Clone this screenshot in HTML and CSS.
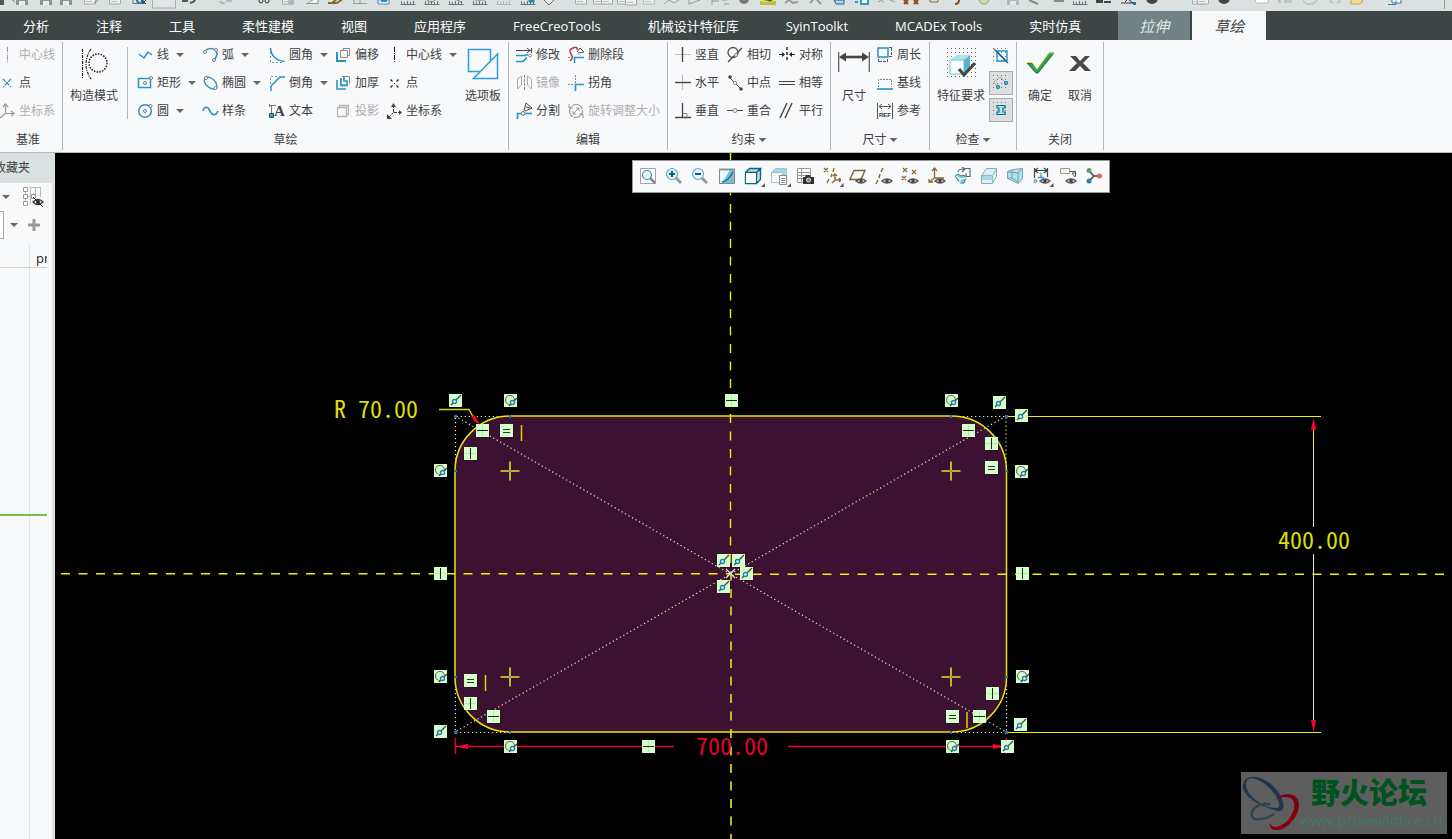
FILE: index.html
```html
<!DOCTYPE html>
<html lang="zh-CN">
<head>
    <meta charset="UTF-8">
    <meta name="viewport" content="width=device-width, initial-scale=1.0">
    <title>草绘</title>
    <link rel="stylesheet" href="styles.css">
</head>
<body>
    <div class="quickbar">
        <svg width="1452" height="11" viewBox="0 0 1452 11" aria-hidden="true">
            <defs>
                <g id="q-ruler"><path d="M0 1h16" stroke="#9a9a9a"/><path d="M.5 9.500h15M1.500 6v3M4.500 7v2M7.500 6v3M10.500 7v2M13.500 6v3" stroke="#6d7272" fill="none"/></g>
                <g id="q-save"><path d="M0 0h12v5H0z" fill="#8d9393"/><path d="M3 1h6v4H3z" fill="#eceeee"/></g>
                <g id="q-page"><path d="M1.500-2h11v6h-11z" fill="#eef0f0" stroke="#a4a9a9"/><path d="M3 1.500h6" stroke="#bbb"/></g>
            </defs>
            <path d="M0 0h4v5H0z" fill="#555"/>
            <use href="#q-save" x="16"/><use href="#q-save" x="40"/><use href="#q-save" x="60"/>
            <path d="M12 0l3 2" stroke="#888"/>
            <use href="#q-page" x="83"/><path d="M94 3l4-3" stroke="#888"/><use href="#q-page" x="108"/>
            <path d="M133 0v3.500h12" stroke="#777" fill="none"/><circle cx="140" cy="0" r="3" fill="none" stroke="#247fa8" stroke-width="2"/><path d="M141 0l5 4M146 0l-4 4" stroke="#333"/>
            <path d="M152.500-1v9h23v-9" fill="#e2e5e5" stroke="#a9aeae"/>
            <path d="M182 1h6M190 3q5-1 5-4" stroke="#555" fill="none" stroke-width="2"/>
            <path d="M220 1q1 3 5 2M226 1h6" stroke="#b5baba" fill="none" stroke-width="2"/>
            <circle cx="261" cy="1" r="2" fill="none" stroke="#333"/><circle cx="267" cy="1" r="2" fill="none" stroke="#333"/>
            <use href="#q-page" x="281"/><circle cx="291" cy="2" r="3" fill="#b4b9b9"/>
            <path d="M306 3.500h12v-5M308 3l6-4" stroke="#8f9595" fill="#f4f6f6"/>
            <path d="M328 3h9l7-5M332 3l6-5" stroke="#8b6b2e" fill="none" stroke-width="2"/>
            <path d="M353 3.500h14M354 0v3M360 0v3" stroke="#999"/>
            <path d="M378 0h11v4h-11z" fill="#e5f4fa" stroke="#5e8ea6"/><path d="M381 0h6v2h-6z" fill="#2b94c5"/>
            <g transform="translate(0 -5)">
                <use href="#q-ruler" x="400"/><use href="#q-ruler" x="424"/><use href="#q-ruler" x="448"/><use href="#q-ruler" x="472"/>
                <use href="#q-ruler" x="496" opacity=".4"/><use href="#q-ruler" x="520"/><use href="#q-ruler" x="1072"/>
            </g>
            <path d="M427 0q5 4 8 0M475 0h10" stroke="#777" fill="none"/><path d="M457 0l4 2M529 0h5v2h-5z" stroke="#2588ad" fill="#2588ad"/>
            <path d="M544 0l5 5 5-5" fill="#eee" stroke="#666"/>
            <use href="#q-page" x="574"/><use href="#q-page" x="592"/><use href="#q-page" x="600"/><use href="#q-page" x="616"/><use href="#q-page" x="624" y="1"/>
            <use href="#q-page" x="642" opacity=".6"/>
            <path d="M664 4l5-4 5 3 5-3M689-1v5l11-4M712 0v5M712 1h7M722 0h5M724 4h5" stroke="#999" fill="none"/>
            <circle cx="744" cy="-1" r="5" fill="#777"/>
            <path d="M760 1h16v4h-16z" fill="#b9c52b"/><path d="M762 1l8 1 4-2" stroke="#f0ee65"/>
            <path d="M785 3l4-3 4 3 5-1M810 3l3-3M817 0l4 4" stroke="#999" fill="none" stroke-width="2"/>
            <path d="M834 0h10v4h-8z" fill="#a6dcf1" stroke="#345a6b"/>
            <path d="M855 2h3M861-1h7v5h-7z" stroke="#2a98cc" fill="#fff" stroke-width="2"/>
            <path d="M878 2q4-3 6 0M888-1l7 3" stroke="#999" fill="none"/>
            <path d="M904 0l4 4M908 0l-4 4M914 0l4 4M918 0l-4 4M959 0q0 4-4 4" stroke="#8a4a1a" fill="none" stroke-width="2"/>
            <path d="M930-2v4h8v-4" stroke="#8b6b2e" fill="none"/>
            <circle cx="984" cy="-1" r="5" fill="#bde59b" stroke="#999"/>
            <use href="#q-save" x="1007" opacity=".5"/><path d="M1029 0l9 4M1054 1h10" stroke="#888" stroke-width="2"/>
            <path d="M1097 0h5v2h-5zM1104 2h7" stroke="#444" stroke-width="2"/>
            <path d="M1121 3h14M1125 2l3-3M1129 0l4 3" stroke="#333"/><path d="M1133 2h3v3h-3z" fill="#1a7ba3"/>
            <circle cx="1152" cy="-2" r="6" fill="#444"/><circle cx="1224" cy="-2" r="6" fill="#444"/>
            <use href="#q-page" x="1191"/><use href="#q-page" x="1196"/>
            <rect x="1255.500" y="-4" width="13" height="7" rx="2" fill="#fff" stroke="#bbb"/>
            <path d="M1278 2h3M1284 2h8M1278 0h3M1284 0h8M1303 1l4 3h6l4-4M1330-1q0 4 3 4M1340-1q0 4-3 4" stroke="#aaa" fill="none"/>
            <path d="M1351-1h9l3 2-3 3h-9z" fill="#f2d9a0" stroke="#c6a25a"/>
            <path d="M1388 4.500h8v-4M1392-2h9v5h-9z" fill="#fff" stroke="#277da0"/>
            <path d="M1444.500 0v9" stroke="#999"/>
        </svg>
    </div>

    <nav class="tabs">
        <button>分析</button>
        <button>注释</button>
        <button>工具</button>
        <button>柔性建模</button>
        <button>视图</button>
        <button>应用程序</button>
        <button>FreeCreoTools</button>
        <button>机械设计特征库</button>
        <button>SyinToolkt</button>
        <button>MCADEx Tools</button>
        <button>实时仿真</button>
        <button class="context">拉伸</button>
        <button class="context active">草绘</button>
    </nav>

    <div class="ribbon">
        <section class="group datum">
            <div class="tools">
                <div class="col">
                    <button class="tool" disabled><svg class="icon" viewBox="0 0 16 16"><path d="M8.500 0v16" stroke="#999" stroke-dasharray="5 1 1 1"/></svg>中心线</button>
                    <button class="tool"><svg class="icon" viewBox="0 0 16 16"><path d="M4 4l8 8M12 4l-8 8" stroke="#3b8fb3" stroke-width="1.200" stroke-dasharray="4 1"/><path d="M7 7h2v2H7z" fill="#3b8fb3"/></svg>点</button>
                    <button class="tool" disabled><svg class="icon" viewBox="0 0 16 16"><path d="M6.500 1v9.500H15M6.500 10.500L1 15M4 4l2.500-3L9 4M12 8l3 2.500-3 2.500" fill="none" stroke="#999" stroke-width="1.200"/></svg>坐标系</button>
                </div>
            </div>
            <div class="title">基准</div>
        </section>

        <section class="group sketch">
            <div class="tools">
                <button class="big construct"><svg viewBox="0 0 32 32"><path d="M4.500 1v30M13 1q-10 15 0 30" fill="none" stroke="#222" stroke-width="1.200" stroke-dasharray="3 1 1 1"/><circle cx="20" cy="15" r="9" fill="none" stroke="#222" stroke-width="1.500" stroke-dasharray="1.500 1.300"/></svg>构造模式</button>
                <div class="col a">
                    <button class="tool"><svg class="icon" viewBox="0 0 16 16"><path d="M2 7l5 4 4-6 4 3" fill="none" stroke="#2494c8" stroke-width="1.500"/></svg>线<i class="caret"></i></button>
                    <button class="tool"><svg class="icon" viewBox="0 0 16 16"><path d="M1.500 3.500h12v9h-12z" fill="none" stroke="#2494c8" stroke-width="1.500"/><circle cx="8" cy="8" r="1.500" fill="none" stroke="#777"/><circle cx="14" cy="3" r="1.500" fill="#fff" stroke="#777"/></svg>矩形<i class="caret"></i></button>
                    <button class="tool"><svg class="icon" viewBox="0 0 16 16"><circle cx="8" cy="8" r="6.300" fill="none" stroke="#2494c8" stroke-width="1.500"/><circle cx="8" cy="8" r="1.500" fill="none" stroke="#777"/><circle cx="13.500" cy="3" r="1.500" fill="#fff" stroke="#777"/></svg>圆<i class="caret"></i></button>
                </div>
                <div class="col b">
                    <button class="tool"><svg class="icon" viewBox="0 0 16 16"><path d="M4 3q5-3 9 0t0 9" fill="none" stroke="#2494c8" stroke-width="1.500"/><circle cx="3" cy="5" r="1.500" fill="#fff" stroke="#777"/><circle cx="14" cy="3" r="1.500" fill="#fff" stroke="#777"/><circle cx="12" cy="13" r="1.500" fill="#fff" stroke="#777"/></svg>弧<i class="caret"></i></button>
                    <button class="tool"><svg class="icon" viewBox="0 0 16 16"><ellipse cx="8.500" cy="8" rx="7.500" ry="4.500" transform="rotate(43 8.500 8)" fill="none" stroke="#2494c8" stroke-width="1.300"/><circle cx="4" cy="3" r="1.500" fill="#fff" stroke="#777"/><circle cx="13.500" cy="13" r="1.500" fill="#fff" stroke="#777"/></svg>椭圆<i class="caret"></i></button>
                    <button class="tool"><svg class="icon" viewBox="0 0 16 16"><path d="M1 8c1-5 5-5 7 0s6 5 8 0" fill="none" stroke="#2494c8" stroke-width="1.600"/></svg>样条</button>
                </div>
                <div class="col c">
                    <button class="tool"><svg class="icon" viewBox="0 0 16 16"><path d="M1.500 1v14.500H14" fill="none" stroke="#888" stroke-dasharray="2 2"/><path d="M1.500 1q1 12 14 13.500" fill="none" stroke="#2494c8" stroke-width="1.500"/></svg>圆角<i class="caret"></i></button>
                    <button class="tool"><svg class="icon" viewBox="0 0 16 16"><path d="M1.500 9V1.500H9" fill="none" stroke="#888" stroke-dasharray="2 2"/><path d="M2 16v-5l9-9h5" fill="none" stroke="#2494c8" stroke-width="1.500"/></svg>倒角<i class="caret"></i></button>
                    <button class="tool"><svg class="icon" viewBox="0 0 16 16"><path d="M2.500 2v8M0 2.500h7M.5 1v3" stroke="#777"/><path d="M.5 10.500h4v4h-4z" fill="#35a1ca" stroke="#14566f"/><text x="5" y="13" class="serif">A</text></svg>文本</button>
                </div>
                <div class="col d">
                    <button class="tool"><svg class="icon" viewBox="0 0 16 16"><path d="M5.500 3.500h7v7h-7zM8 3V1.500h6.500v7H13" fill="none" stroke="#888"/><path d="M2 5v9h9" fill="none" stroke="#2494c8" stroke-width="2"/></svg>偏移</button>
                    <button class="tool"><svg class="icon" viewBox="0 0 16 16"><path d="M5.500 3.500V11h7M7 1.500h7.500v7" fill="none" stroke="#888"/><path d="M2 5v9h9M6 3v7h6V6H9V2" fill="none" stroke="#2494c8" stroke-width="1.600"/></svg>加厚</button>
                    <button class="tool" disabled><svg class="icon" viewBox="0 0 16 16"><path d="M2.500 4.500h9v9h-9zM4.500 4V2.500h9v9H12" fill="none" stroke="#b5b5b5" stroke-width="1.300"/></svg>投影</button>
                </div>
                <div class="col e">
                    <button class="tool"><svg class="icon" viewBox="0 0 16 16"><path d="M8.500 0v16" stroke="#222" stroke-dasharray="5 1 1 1"/></svg>中心线<i class="caret"></i></button>
                    <button class="tool"><svg class="icon" viewBox="0 0 16 16"><path d="M4.500 4.500l2 2M12.500 4.500l-2 2M4.500 12.500l2-2M12.500 12.500l-2-2" stroke="#222" stroke-width="1.300"/><path d="M8 8h1v1H8z" fill="#222"/></svg>点</button>
                    <button class="tool"><svg class="icon" viewBox="0 0 16 16"><path d="M7.500 2v7.500H15M7.500 9.500L2 15" fill="none" stroke="#444" stroke-dasharray="3 1"/><path d="M5 4l2.500-4L10 4zM13 7l3 2.500-3 2.500zM1 11v5h5z" fill="#444"/></svg>坐标系</button>
                </div>
                <button class="big palette"><svg viewBox="0 0 32 32"><path d="M1.500 1.500h22v22h-22z" fill="none" stroke="#2ba0d2" stroke-width="1.500"/><path d="M30.500 6v24.500h-24z" fill="#f8f9fb" stroke="#2ba0d2" stroke-width="1.500"/></svg>选项板</button>
            </div>
            <div class="title">草绘</div>
        </section>

        <section class="group edit">
            <div class="tools">
                <div class="col f">
                    <button class="tool"><svg class="icon" viewBox="0 0 16 16"><path d="M0 3.500h15M15.500 1v5M11 1l3 2.500L11 6" fill="none" stroke="#444"/><path d="M0 8.500h9l3-1M0 14.500h7l4-4" fill="none" stroke="#2494c8" stroke-width="1.600"/><circle cx="14" cy="8.500" r="1.500" fill="none" stroke="#888"/></svg>修改</button>
                    <button class="tool" disabled><svg class="icon" viewBox="0 0 16 16"><path d="M8.500 0v16" stroke="#888" stroke-dasharray="3 1"/><path d="M1.500 4v10l4-4V1zM15.500 4v10l-4-4V1z" fill="none" stroke="#aaa"/></svg>镜像</button>
                    <button class="tool"><svg class="icon" viewBox="0 0 16 16"><path d="M1.500 16v-5.500H16" fill="none" stroke="#2494c8" stroke-width="1.600"/><circle cx="7" cy="10.500" r="2" fill="#fff" stroke="#777"/><path d="M8 8l2-8 6 5-7 3M10 4l4 1" fill="none" stroke="#444"/></svg>分割</button>
                </div>
                <div class="col">
                    <button class="tool"><svg class="icon" viewBox="0 0 16 16"><path d="M2 14q4-3 1-7t2-6 4 2" fill="none" stroke="#ad4242" stroke-width="1.500"/><path d="M0 10.500h4" stroke="#888" stroke-dasharray="2 1"/><path d="M9 5l3-4 4 4-6 1" fill="none" stroke="#555"/><path d="M6.500 16v-5.500H16" fill="none" stroke="#2494c8" stroke-width="1.600"/></svg>删除段</button>
                    <button class="tool"><svg class="icon" viewBox="0 0 16 16"><path d="M7.500 0v8M0 9.500h6" stroke="#888" stroke-dasharray="2 1"/><path d="M7.500 16V9.500H16" fill="none" stroke="#2494c8" stroke-width="1.600"/></svg>拐角</button>
                    <button class="tool" disabled><svg class="icon" viewBox="0 0 16 16"><circle cx="8" cy="8" r="6.500" fill="none" stroke="#999" stroke-width="1.200" stroke-dasharray="12 1"/><path d="M1 1v4h4M15 15v-4h-4M5 11l6-6M5 8v3h3M8 5h3v3" fill="none" stroke="#999"/></svg>旋转调整大小</button>
                </div>
            </div>
            <div class="title">编辑</div>
        </section>

        <section class="group constraint">
            <div class="tools">
                <div class="col">
                    <button class="tool"><svg class="icon" viewBox="0 0 16 16"><path d="M0 7.500h16" stroke="#bbb"/><path d="M7.500 0v15" stroke="#444" stroke-width="1.400"/></svg>竖直</button>
                    <button class="tool"><svg class="icon" viewBox="0 0 16 16"><path d="M7.500 0v15" stroke="#bbb"/><path d="M0 7.500h16" stroke="#444" stroke-width="1.400"/></svg>水平</button>
                    <button class="tool"><svg class="icon" viewBox="0 0 16 16"><path d="M0 14.500h16M7.500 0v14" stroke="#444" stroke-width="1.300"/><path d="M8 10.500h4v4" fill="none" stroke="#888"/></svg>垂直</button>
                </div>
                <div class="col">
                    <button class="tool"><svg class="icon" viewBox="0 0 16 16"><circle cx="6" cy="5.500" r="5" fill="none" stroke="#555" stroke-width="1.300"/><path d="M1 15L15 1" stroke="#444" stroke-width="1.300"/><circle cx="9" cy="8" r="1.500" fill="#fff" stroke="#888"/></svg>相切</button>
                    <button class="tool"><svg class="icon" viewBox="0 0 16 16"><path d="M2 2l12 12" stroke="#444"/><circle cx="3" cy="2" r="1.800" fill="#444"/><circle cx="14" cy="14" r="1.800" fill="#444"/><circle cx="8" cy="8" r="1.600" fill="#fff" stroke="#888"/></svg>中点</button>
                    <button class="tool"><svg class="icon" viewBox="0 0 16 16"><path d="M0 7.500h16" stroke="#444"/><circle cx="8" cy="7.500" r="2" fill="#fff" stroke="#888"/></svg>重合</button>
                </div>
                <div class="col">
                    <button class="tool"><svg class="icon" viewBox="0 0 16 16"><path d="M8 0v15" stroke="#222" stroke-width="1.400" stroke-dasharray="3 2"/><path d="M0 7.500h4M16 7.500h-4" stroke="#222"/><path d="M3 5l3 2.500-3 2.500zM13 5l-3 2.500 3 2.500z" fill="#222"/></svg>对称</button>
                    <button class="tool"><svg class="icon" viewBox="0 0 16 16"><path d="M0 6.500h16M0 9.500h16" stroke="#444" stroke-width="1.200"/></svg>相等</button>
                    <button class="tool"><svg class="icon" viewBox="0 0 16 16"><path d="M1 15L8 0M6 15l7-15" stroke="#444" stroke-width="1.400"/></svg>平行</button>
                </div>
            </div>
            <div class="title">约束<i class="caret"></i></div>
        </section>

        <section class="group dimension">
            <div class="tools">
                <button class="big"><svg viewBox="0 0 32 32"><path d="M.7 4v20M31.300 4v20" stroke="#555" stroke-width="1.200"/><path d="M5 9h22" stroke="#444" stroke-width="2.600"/><path d="M1 9L8 4.500v9zM31 9L24 4.500v9z" fill="#444"/></svg>尺寸</button>
                <div class="col">
                    <button class="tool"><svg class="icon" viewBox="0 0 16 16"><path d="M1 1h10v9H1z" fill="none" stroke="#2494c8" stroke-width="1.500"/><path d="M12 .5h4M12 9.500h4M14.500 1v8M1.500 12v4M10.500 12v4M2 14.500h8" stroke="#555" stroke-dasharray="3 1"/></svg>周长</button>
                    <button class="tool"><svg class="icon" viewBox="0 0 16 16"><path d="M1.500 12V4.500h13V12" fill="none" stroke="#888" stroke-dasharray="2 1"/><path d="M0 14h16" stroke="#2494c8" stroke-width="1.600"/></svg>基线</button>
                    <button class="tool"><svg class="icon" viewBox="0 0 16 16"><path d="M.5 0v16M15.500 0v16M2 3.500h12M5 1L2 3.500 5 6M11 1l3 2.500L11 6" fill="none" stroke="#555"/><text x="2" y="14" class="ref">REF</text></svg>参考</button>
                </div>
            </div>
            <div class="title">尺寸<i class="caret"></i></div>
        </section>

        <section class="group inspect">
            <div class="tools">
                <button class="big"><svg viewBox="0 0 32 32"><path d="M2 .5h30M2 4.500h30M2 8.500h30M2 12.500h30M2 16.500h30M2 20.500h30M2 24.500h30M2 28.500h30" stroke="#666" stroke-dasharray="1 3"/><path d="M5 12l6-5h14l-5 5z" fill="#b4e2ef"/><path d="M5 12h14v14H5z" fill="#fafeff" stroke="#75bfd6"/><path d="M19 12l6-5v14l-6 5z" fill="#5db0cf"/><path d="M14 21l5 6L30 15" fill="none" stroke="#444" stroke-width="3"/></svg>特征要求</button>
                <div class="toggles">
                    <button class="toggle" aria-label="着色封闭环"><svg viewBox="0 0 16 16"><path d="M0 .5h16M0 4.500h16M0 8.500h16M0 12.500h16" stroke="#777" stroke-dasharray="1 3"/><path d="M4 3.500V13h9zM4 3h10v10" fill="none" stroke="#2494c8" stroke-width="1.400"/><path d="M1 1l14 14" stroke="#245b76" stroke-width="1.300"/></svg></button>
                    <button class="toggle on" aria-label="突出显示开放端"><svg viewBox="0 0 16 16"><path d="M0 .5h16M0 4.500h16M0 8.500h16M0 12.500h16" stroke="#777" stroke-dasharray="1 3"/><path d="M4 11L1 7l6-5 5 5" fill="none" stroke="#aaa"/><circle cx="5" cy="12" r="1.700" fill="#42b6dd" stroke="#277b9a"/><circle cx="13" cy="8" r="1.700" fill="#42b6dd" stroke="#277b9a"/></svg></button>
                    <button class="toggle on" aria-label="重叠几何"><svg viewBox="0 0 16 16"><path d="M0 .5h16M0 4.500h16M0 8.500h16M0 12.500h16" stroke="#777" stroke-dasharray="1 3"/><path d="M4 3.500h8v2.500h-2v4h2v2.500H4V10h2V6H4z" fill="#a7e5f8" stroke="#176f91" stroke-width="1.200"/></svg></button>
                </div>
            </div>
            <div class="title">检查<i class="caret"></i></div>
        </section>

        <section class="group close">
            <div class="tools">
                <button class="big"><svg viewBox="0 0 32 32"><path d="M3 15h5l5 7L25 5h5L14 25h-2z" fill="#2f9e62" stroke="#256b38"/><path d="M3 14.500h5l5 7L25 5h5" fill="none" stroke="#cce52d"/></svg>确定</button>
                <button class="big"><svg viewBox="0 0 32 32"><path d="M6 8h6l4 5 5-5h5l-7 7 8 8h-6l-5-5-5 5H5l8-8z" fill="#484848"/></svg>取消</button>
            </div>
            <div class="title">关闭</div>
        </section>
    </div>

    <main class="workspace">
        <aside class="side">
            <button class="side-tab">收藏夹</button>
            <div class="tree">
                <div class="tree-tools">
                    <i class="caret"></i>
                    <button aria-label="树过滤器"><svg width="22" height="22" viewBox="0 0 22 22"><path d="M3.500 5v12M6 10.500h4M8 1.500h11M8.500 2v16M13.500 2v7M18.500 2v9" fill="none" stroke="#bbb"/><path d="M1.500 1.500h4v4h-4zM1.500 8.500h4v4h-4zM1.500 15.500h4v4h-4zM9.500 8.500h4v4h-4z" fill="#fff" stroke="#999"/><path d="M11 16q5-5 10 0-5 5-10 0z" fill="none" stroke="#333" stroke-width="1.300"/><circle cx="16" cy="16" r="2" fill="#333"/><path d="M11 11l10 10" stroke="#111"/></svg></button>
                </div>
                <div class="search">
                    <input type="text" aria-label="搜索">
                    <i class="caret"></i>
                    <button aria-label="添加"><svg width="12" height="12" viewBox="0 0 12 12"><path d="M6 0v12M0 6h12" stroke="#999" stroke-width="3"/></svg></button>
                </div>
                <div class="list">
                    <div class="list-head">prt</div>
                    <div class="list-body"><hr></div>
                </div>
            </div>
        </aside>

        <div class="canvas">
            <svg class="drawing" viewBox="55 153 1397 686" preserveAspectRatio="xMinYMin meet">
                <defs>
                    <g id="tag"><path d="M-5-5H8V8H-5z" fill="#000" opacity=".2"/><path d="M-6-6h13v13h-13z" fill="#d4ffc8"/></g>
                    <g id="co"><use href="#tag"/><path d="M-4 5L6-5" stroke="#444" stroke-width="1.200"/><circle cx="-.5" cy="1.500" r="2" fill="#e8ffff" stroke="#1f7dac" stroke-width="1.400"/></g>
                    <g id="tan"><use href="#tag"/><circle cx="0" cy="0" r="4.500" fill="none" stroke="#647264" stroke-width="1.200"/><path d="M-1 6L7-2" stroke="#444" stroke-width="1.200"/><circle cx="2.500" cy="2.500" r="2" fill="#e8ffff" stroke="#1f7dac" stroke-width="1.400"/></g>
                    <g id="hor"><use href="#tag"/><path d="M.5-5V6" stroke="#c0e0b8"/><path d="M-5 .5H6" stroke="#222"/></g>
                    <g id="ver"><use href="#tag"/><path d="M-5 .5H6" stroke="#c0e0b8"/><path d="M.5-5V6" stroke="#222"/></g>
                    <g id="eq"><use href="#tag"/><path d="M-3-.5h7M-3 2.500h7" stroke="#333" stroke-width="1.200"/></g>
                    <g id="plus"><path d="M-9.500 0h19M0-9.500v19" stroke="#e2e21c" stroke-width="1.600"/><path d="M-1-1h2v2h-2z" fill="#5b9cc4"/></g>
                </defs>

                <rect x="455" y="416" width="551" height="316" rx="55" fill="#3d1131"/>

                <!-- reference centerlines -->
                <path d="M61 573.800H731M730.500 151.500V568" class="center"/>
                <path d="M735 574.300H1452" class="center"/>
                <path d="M731 571.500V839" class="center heavy"/>

                <!-- construction geometry -->
                <path d="M455 416L1006 732M1006 416L455 732" class="dots"/>
                <path d="M510 416.500H455.500V471M951 416.500h55V471M455.500 677v55.500H510M1006.500 677v55.500H951" class="dots"/>

                <rect x="455" y="416" width="551.500" height="316" rx="55" class="outline"/>

                <!-- height -->
                <path d="M1006 416.500h315M1006 732.500h315" class="yellow"/>
                <path d="M1313.500 446V527M1313.500 554V720" stroke="#e8e8e8"/>
                <path d="M1313.500 428v18" class="yellow"/>
                <path d="M1311 430l2.500-12 2.500 12zM1311 720l2.500 12 2.500-12z" fill="#ff0033"/>
                <text x="1278" y="549" class="dim">400.00</text>

                <!-- width -->
                <path d="M455.500 738v16M1006.500 738v16M456 746.500H674M788 746.500h218" stroke="#e8002f" stroke-width="1.400"/>
                <path d="M456 746.500l12-2.500v5zM1005 746.500l-12-2.500v5z" fill="#ff0033"/>
                <text x="696" y="755" class="dim red">700.00</text>

                <!-- radius -->
                <path d="M439 409.500h30l4 7" class="yellow mark"/>
                <path d="M471 416l3-1 6 9-5-2z" fill="#ff0033"/>
                <text x="334" y="418" class="dim">R 70.00</text>

                <use href="#plus" x="510" y="471"/><use href="#plus" x="951" y="471"/>
                <use href="#plus" x="510" y="677"/><use href="#plus" x="951" y="677"/>
                <path d="M521.500 425v16M485.500 675v16M967 712v16" class="yellow mark"/>
                <path d="M726 569l9 9M735 569l-9 9" stroke="#ddd" stroke-width="1.400"/>
                <path d="M454 415h3v3h-3zM1005 415h3v3h-3zM454 731h3v3h-3zM1005 731h3v3h-3zM509 415h2v3h-2zM950 415h2v3h-2zM509 731h2v3h-2zM950 731h2v3h-2zM454 470h3v2h-3zM1005 470h3v2h-3zM454 676h3v2h-3zM1005 676h3v2h-3z" fill="#2f6fb0"/>

                <use href="#co" x="455" y="400"/><use href="#co" x="999" y="402"/><use href="#co" x="1021" y="415"/>
                <use href="#co" x="723" y="560"/><use href="#co" x="738" y="560"/><use href="#co" x="746" y="573"/><use href="#co" x="723" y="586"/>
                <use href="#co" x="440" y="731"/><use href="#co" x="1020" y="724"/><use href="#co" x="1007" y="746"/>
                <use href="#tan" x="510" y="400"/><use href="#tan" x="951" y="400"/><use href="#tan" x="440" y="470"/><use href="#tan" x="1021" y="471"/>
                <use href="#tan" x="440" y="676"/><use href="#tan" x="1022" y="676"/><use href="#tan" x="510" y="746"/><use href="#tan" x="952" y="746"/>
                <use href="#hor" x="731" y="400"/><use href="#hor" x="482" y="430"/><use href="#hor" x="968" y="430"/>
                <use href="#hor" x="648" y="746"/><use href="#hor" x="493" y="716"/><use href="#hor" x="979" y="716"/>
                <use href="#ver" x="470" y="453"/><use href="#ver" x="991" y="443"/><use href="#ver" x="440" y="573"/>
                <use href="#ver" x="1022" y="573"/><use href="#ver" x="470" y="703"/><use href="#ver" x="992" y="693"/>
                <use href="#eq" x="506" y="430"/><use href="#eq" x="991" y="467"/><use href="#eq" x="470" y="680"/><use href="#eq" x="952" y="716"/>
            </svg>

            <div class="viewbar">
                <button aria-label="重新调整"><svg viewBox="0 0 18 18"><path d="M1.500 1.500h15v15h-15z" fill="#f4fbfc" stroke="#a5a5a5"/><path d="M11 11l5 5" stroke="#888" stroke-width="2.500"/><circle cx="8" cy="8" r="4.500" fill="#e4f6fa" stroke="#4389a9" stroke-width="1.200"/></svg></button>
                <button aria-label="放大"><svg viewBox="0 0 18 18"><path d="M11 11l5 5" stroke="#999" stroke-width="3"/><circle cx="7" cy="7" r="5.500" fill="#e4f6fa" stroke="#6ba6be" stroke-width="1.200"/><path d="M7 4v6M4 7h6" stroke="#075b8b" stroke-width="2"/></svg></button>
                <button aria-label="缩小"><svg viewBox="0 0 18 18"><path d="M11 11l5 5" stroke="#999" stroke-width="3"/><circle cx="7" cy="7" r="5.500" fill="#e4f6fa" stroke="#6ba6be" stroke-width="1.200"/><path d="M4 7h6" stroke="#075b8b" stroke-width="2"/></svg></button>
                <button aria-label="重画"><svg viewBox="0 0 18 18"><path d="M1.500 2.500h15v14h-15z" fill="#79bdd6" stroke="#888"/><path d="M2 3h10L4 16H2z" fill="#e9fafe"/><path d="M1 2.500h16" stroke="#8a9498" stroke-width="2"/><path d="M4 15q5 0 11-10-3 8-11 10z" fill="#17698d" stroke="#17698d"/></svg></button>
                <button aria-label="显示样式"><svg viewBox="0 0 18 18"><path d="M1.500 5.500l4-4h11v11l-4 4h-11z" fill="#a9dced"/><path d="M1.500 5.500h11v11h-11zM1.500 5.500l4-4h11l-4 4M16.500 1.500v11l-4 4" fill="none" stroke="#126180" stroke-width="1.300"/><path d="M2 6h10v10H2z" fill="#fff"/></svg><i class="more"></i></button>
                <button aria-label="已保存方向"><svg viewBox="0 0 18 18"><path d="M1.500 5.500l4-4h11v10h-15z" fill="#9fd6e8" stroke="#9cc9d7"/><path d="M1.500 5.500h11v10h-11z" fill="#f4fcfe" stroke="#a5c1ca"/><path d="M9.500 8.500h7v9h-7z" fill="#fff" stroke="#888"/><path d="M11 11.500h4M11 13.500h4M11 15.500h4" stroke="#888"/></svg><i class="more"></i></button>
                <button aria-label="视图管理器"><svg viewBox="0 0 18 18"><path d="M1.500 1.500h13v14h-13zM2 5.500h12M2 8.500h12M2 11.500h12M5.500 2v13" fill="#fff" stroke="#999"/><path d="M7 10h2l1-2h4l1 2h3v7H7z" fill="#333"/><circle cx="12.500" cy="13" r="2" fill="#777" stroke="#eee"/></svg></button>
                <button aria-label="基准显示过滤器"><svg viewBox="0 0 18 18"><path d="M1 1l4 4M5 1L1 5M11 1l-1 4M9 7l-1 3M6 12l-2 4M12 7v6h6M12 13l-3 3M10 9l2-2 2 2M16 11l2 2-2 2" fill="none" stroke="#8a682e" stroke-width="1.400"/></svg><i class="more"></i></button>
                <button aria-label="平面显示"><svg viewBox="0 0 18 18"><path d="M5 3.500h11l-4 9H1z" fill="none" stroke="#806331" stroke-width="1.400"/><use href="#eye"/></svg></button>
                <button aria-label="轴显示"><svg viewBox="0 0 18 18"><g id="eye"><path d="M7 14q5-4 10 0-5 4-10 0z" fill="#f8f9fb" stroke="#555" stroke-width="1.400"/><circle cx="12" cy="14" r="1.800" fill="#444"/></g><path d="M8 1L6 5M5 7l-1 4M3 13l-2 4" stroke="#8a682e" stroke-width="1.500"/></svg></button>
                <button aria-label="点显示"><svg viewBox="0 0 18 18"><path d="M2 1l4 4M6 1L2 5M11 3l4 4M15 3l-4 4M1 9l4 4M5 9l-4 4" stroke="#8a682e" stroke-width="1.300"/><use href="#eye"/></svg></button>
                <button aria-label="坐标系显示"><svg viewBox="0 0 18 18"><path d="M6.500 1v10H16M6.500 11L1 15M4 4l2.500-3L9 4M1 12v3h4" fill="none" stroke="#8a682e" stroke-width="1.300"/><use href="#eye"/></svg></button>
                <button aria-label="旋转中心"><svg viewBox="0 0 18 18"><path d="M4 5q0-3 6-3M8 0l3 2-3 3M11 1.500h5v8h-4V7h1" fill="none" stroke="#666" stroke-width="1.200"/><path d="M1 9l3-2 3 2 3-1 2 3-2 5H6z" fill="#7bc6df" stroke="#327e98"/><path d="M2 9l4 3 6-1M6 12v4" fill="none" stroke="#eefbff" stroke-width="1.400"/></svg></button>
                <button aria-label="着色"><svg viewBox="0 0 18 18"><path d="M1.500 8.500l5-7h10v8l-4 7h-11z" fill="#dcf1f6" stroke="#8fa8af"/><path d="M2 9h10v4H2z" fill="#a9d9e7"/><path d="M1.500 8.500h11l4-7M12.500 9v7" fill="none" stroke="#8dbccb"/></svg></button>
                <button aria-label="透视图"><svg viewBox="0 0 18 18"><path d="M1.500 4.500l5-2 10-1v10l-4 5-11-5z" fill="#b4dfeb" stroke="#7fa7b5"/><path d="M2 5l10 1 4-4M12 6v10M6 3v8l6 4M6 11H2" fill="none" stroke="#6aa5b8"/></svg></button>
                <button aria-label="注释显示"><svg viewBox="0 0 18 18"><path d="M1.500 1v10M14.500 1v9M2 3.500h12M5 1L2 3.500 5 6M11 1l3 2.500L11 6" fill="none" stroke="#444" stroke-width="1.200"/><path d="M5 10.500h6M8 6v4" stroke="#2ba0d2" stroke-width="1.300"/><circle cx="2.500" cy="14" r="1.500" fill="#ccc" stroke="#888"/><use href="#eye"/></svg><i class="more"></i></button>
                <button aria-label="标注"><svg viewBox="0 0 18 18"><path d="M1.500 1.500h9v5h-9z" fill="#fff4dd" stroke="#999"/><path d="M11 4.500h5.500V8M13 6l3 4 1-4z" fill="none" stroke="#555"/><use href="#eye"/></svg></button>
                <button aria-label="连接"><svg viewBox="0 0 18 18"><path d="M4 4l5 5-5 5M9 9h5" fill="none" stroke="#444" stroke-width="1.500"/><circle cx="4" cy="3.500" r="2.500" fill="#5aa35d"/><circle cx="4" cy="14" r="2.500" fill="#2e7fa7"/><circle cx="14.500" cy="9" r="2.500" fill="#de6259"/></svg></button>
            </div>

            <div class="watermark">
                <svg viewBox="0 0 58 56" width="58" height="56"><path fill-rule="evenodd" fill="#1f374a" d="M2 12C0-2 18-3 31 9s14 26 8 26S5 26 2 12zm3-3c0 10 18 24 31 23 6-1-1-15-11-23S5 0 5 9z"/><path fill-rule="evenodd" fill="#82000d" d="M34 24c8-9 24-8 24 5 0 12-13 26-23 25-5 0-7-4-6-7 2 7 11 4 17-2 8-8 10-21 3-23-5-2-11-1-15 2z"/><path fill="none" stroke="#32434e" stroke-width="2.500" d="M29 29C20 25 9 33 11 40c1 5 14 4 22-2"/></svg>
                <div class="site">
                    <strong>野火论坛</strong>
                    <span>www.proewildfire.cn</span>
                </div>
            </div>
        </div>
    </main>
</body>
</html>
```

FILE: styles.css
```css
* {
    margin: 0;
    padding: 0;
    box-sizing: border-box;
}

body {
    display: flex;
    flex-direction: column;
    height: 100vh;
    overflow: hidden;
    background: #000;
    color: #404040;
    font-family: "Open Sans", "Noto Sans CJK SC", sans-serif;
    font-size: 12px;
    line-height: 16px;
}

button {
    border: 0;
    background: none;
    color: inherit;
    font: inherit;
    white-space: nowrap;
}

svg {
    display: block;
    flex: none;
}

.quickbar {
    height: 11px;
    flex: none;
    overflow: hidden;
    background: #dbe1e0;
}

/* Menu tabs */
.tabs {
    display: flex;
    flex: none;
    height: 29px;
    gap: 47px;
    padding-left: 23px;
    background: #3d4545;
    color: #fff;
    font-size: 13px;
}

.tabs .context {
    width: 72px;
    margin-left: -10px;
    background: #728284;
    color: #e3e9e9;
    font-size: 15px;
    font-style: italic;
}

.tabs .active {
    width: 74px;
    margin-left: -45px;
    background: #f8f9fb;
    color: #404040;
}

/* Ribbon */
.ribbon {
    display: flex;
    flex: none;
    padding: 2px 0;
    border-bottom: 1px solid #b4bdbe;
    background: #f8f9fb;
}

.group {
    display: flex;
    flex-direction: column;
    border-right: 1px solid #b2b8ba;
}

.tools {
    display: flex;
    height: 82px;
}

.title {
    display: flex;
    align-items: center;
    justify-content: center;
    height: 26px;
    padding-top: 6px;
}

.col {
    display: flex;
    flex-direction: column;
    margin-top: -1px;
}

.tool {
    display: flex;
    flex: none;
    align-items: center;
    gap: 4px;
    height: 28px;
}

.tool:disabled {
    color: #adadad;
}

.icon {
    width: 16px;
    height: 16px;
    overflow: visible;
}

.caret {
    flex: none;
    width: 8px;
    height: 4px;
    background: #666;
    clip-path: polygon(0 0, 100% 0, 50% 100%);
}

.tool .caret,
.title .caret {
    margin-left: 3px;
}

.big {
    display: flex;
    flex-direction: column;
    align-items: center;
    gap: 8px;
    padding-top: 6px;
}

.big svg {
    width: 32px;
    height: 32px;
}

.datum {
    width: 63px;
}

.datum .col {
    margin-left: -1px;
}

.datum .title {
    padding-right: 6px;
}

.sketch {
    width: 446px;
}

.construct {
    width: 65px;
    margin: 5px 9px 5px 0;
    padding: 1px 2px 0 0;
    border-right: 1px solid #b2b8ba;
}

.a { width: 65px; }
.b { width: 67px; }
.c { width: 66px; }
.d { width: 51px; }
.e { width: 79px; }
.f { width: 52px; }

.edit {
    width: 159px;
}

.edit .tools,
.constraint .tools,
.dimension .tools,
.inspect .tools,
.close .tools {
    padding-left: 7px;
}

.constraint {
    width: 163px;
}

.constraint .tools {
    gap: 8px;
}

.dimension {
    width: 99px;
}

.dimension .tools {
    gap: 7px;
}

.inspect {
    width: 87px;
}

.inspect .tools {
    gap: 4px;
}

.toggles {
    display: flex;
    flex-direction: column;
    gap: 3px;
    padding-top: 2px;
}

.toggle {
    display: grid;
    flex: none;
    place-items: center;
    width: 24px;
    height: 24px;
    border: 1px solid transparent;
}

.toggle svg {
    width: 16px;
    height: 16px;
}

.toggle.on {
    border-color: #a9acad;
    background: #dcdee0;
}

.close {
    width: 87px;
}

.close .tools {
    gap: 8px;
}

.serif {
    font: bold 15px "Liberation Serif", serif;
    fill: #444;
}

.ref {
    font: bold 6px "Liberation Sans", sans-serif;
    fill: #333;
}

/* Side panel */
.workspace {
    display: flex;
    flex: 1;
    min-height: 0;
}

.side {
    display: flex;
    flex-direction: column;
    width: 55px;
    padding-right: 3px;
    background: #dbe1e0;
    overflow: hidden;
}

.side-tab {
    align-self: flex-start;
    height: 30px;
    margin-left: -6px;
}

.tree {
    display: flex;
    flex: 1;
    flex-direction: column;
    background: #f8f9fb;
}

.tree-tools {
    display: flex;
    align-items: center;
    gap: 12px;
    height: 28px;
    padding-left: 2px;
}

.search {
    display: flex;
    align-items: center;
    gap: 6px;
    height: 28px;
}

.search input {
    width: 4px;
    height: 28px;
    border: 1px solid #aaa;
    border-left: 0;
    background: #fff;
}

.search button {
    margin-left: 4px;
}

.list {
    display: flex;
    flex: 1;
    flex-direction: column;
    margin: 6px 5px 0 0;
    background: linear-gradient(90deg, transparent 29px, #dfe2e4 29px 30px, transparent 30px);
    overflow: hidden;
}

.list-head {
    display: flex;
    align-items: center;
    height: 23px;
    padding: 4px 0 0 36px;
    border-bottom: 1px solid #cfcfcf;
    color: #222;
    font-size: 13px;
}

.list-body {
    padding-top: 246px;
}

.list-body hr {
    border: 0;
    border-top: 2px solid #6fc24a;
}

/* Graphics area */
.canvas {
    position: relative;
    flex: 1;
    min-width: 0;
    overflow: hidden;
}

.drawing {
    width: 100%;
}

.center {
    fill: none;
    stroke: #f0f000;
    stroke-width: 1.4;
    stroke-dasharray: 9 8.5;
}

.heavy {
    stroke: #bcbc1c;
    stroke-width: 2;
}

.dots {
    fill: none;
    stroke: #e0dcb8;
    stroke-width: 1.2;
    stroke-dasharray: 1.3 2.7;
}

.outline {
    fill: none;
    stroke: #e6e60c;
    stroke-width: 1.5;
}

.yellow {
    fill: none;
    stroke: #f0f000;
}

.mark {
    stroke: #d6d600;
    stroke-width: 1.5;
}

.dim {
    fill: #dede00;
    font-family: "Noto Sans Mono CJK SC", "Liberation Mono", monospace;
    font-size: 24px;
    font-weight: 300;
}

.red {
    fill: #e8002e;
}

.viewbar {
    position: absolute;
    top: 7px;
    left: 577px;
    display: flex;
    align-items: center;
    justify-content: space-between;
    width: 478px;
    height: 33px;
    padding: 0 6px 1px;
    border: 1px solid #999;
    background: #f8f9fb;
}

.viewbar button {
    position: relative;
}

.viewbar svg {
    width: 18px;
    height: 18px;
}

.more {
    position: absolute;
    right: -3px;
    bottom: -2px;
    width: 4px;
    height: 4px;
    background: #555;
    clip-path: polygon(100% 0, 100% 100%, 0 100%);
}

.watermark {
    position: absolute;
    right: 5px;
    bottom: 5px;
    display: flex;
    width: 206px;
    height: 62px;
    padding-top: 4px;
    background: #5e5e5e;
}

.site {
    display: flex;
    flex-direction: column;
}

.site strong {
    padding-left: 12px;
    color: #00521e;
    font-size: 29px;
    font-weight: 900;
    line-height: 34px;
}

.site span {
    color: #3c7a69;
    font-size: 15px;
    line-height: 20px;
}
```
